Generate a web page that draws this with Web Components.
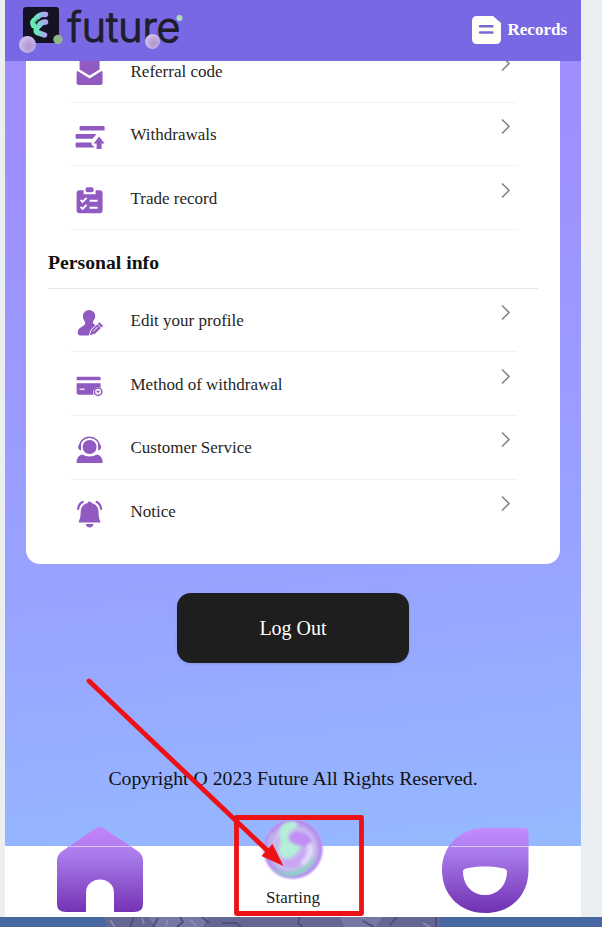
<!DOCTYPE html>
<html lang="en"><head><meta charset="utf-8"><title>Future</title>
<style>body{margin:0;background:#ebeff2;font-family:"Liberation Serif","Times New Roman",serif;color:#222}</style></head>
<body><app-screen></app-screen>
<script>
const define=(name,html)=>{const t=document.createElement('template');t.innerHTML=html;
customElements.define(name,class extends HTMLElement{constructor(){super();this.attachShadow({mode:'open'}).append(t.content.cloneNode(true))}})};

const icons={
mail:'<path d="M4 0h18q1 0 1 1v9.500l-10 6-10-6V1q0-1 1-1Z"/><path d="M1 12 13 19.500 25 12q1 0 1 2v10q0 2-2 2H2q-2 0-2-2V14q0-2 1-2Z"/>',
withdraw:'<path d="M4 3h23a1 1 0 0 1 1 1v3.500H3V4a1 1 0 0 1 1-1ZM0 11h20l-4 4.800H0a1 1 0 0 1-1-1V12a1 1 0 0 1 1-1ZM0 19.500h15v2l3 3H0a1 1 0 0 1-1-1v-3a1 1 0 0 1 1-1Z"/><path d="m22.500 13.500 5.500 7h-3V26h-5v-5.500h-3Z"/>',
trade:'<g transform="translate(0 .8)"><path fill-rule="evenodd" d="M3 3.500h4v4h12v-4h4q3 0 3 3v17q0 3-3 3H3q-3 0-3-3v-17q0-3 3-3Z"/><rect x="9" y=".5" width="8" height="5" rx="2"/><path d="m4 13 2 2 4-4m3 3h8M4 20l2 2 4-4m3 3h8" fill="none" stroke="#fff" stroke-width="1.900"/></g>',
edit:'<path d="M12.500 1a6.200 6.200 0 0 1 6.200 6.200c0 3-2.500 4.300-2.500 6.300 0 1.500 2.300 2 3.300 2.700L12.500 26.500H3Q.8 26 1.200 22.500c.5-4 5.800-5 7.300-7.500.8-2-2.200-4-2.200-7.800A6.200 6.200 0 0 1 12.500 1Z"/><path d="m12.500 27 2-6 8.300-8.300 4.200 4.200-8.300 8.100Z" stroke="#fff" stroke-width="1"/><path d="m20.500 14.800 4.300 4.200M16.500 22.500l4.500-4.500" stroke="#fff" stroke-width="1"/>',
card:'<g transform="translate(0 .7)"><path d="M1 4h22q1 0 1 1v2.500H0V5q0-1 1-1ZM0 10.500h24v4.200a5.300 5.300 0 0 0-6.800 7.300H2q-2 0-2-2Z"/><path d="M3 16.500h5" stroke="#fff" stroke-width="1.200"/><circle cx="21.500" cy="19" r="3.700" fill="#fff" stroke="#905ac0" stroke-width="1.500"/><path d="M19.700 19h3.600M21.500 17.200v3.600" stroke="#905ac0" stroke-width="1"/></g>',
service:'<circle cx="13" cy="11" r="7"/><path d="M3 11a10 9.800 0 0 1 20 0" fill="none" stroke="#905ac0" stroke-width="1.500"/><path d="M4.500 7.500v7q-3-1-3-3.500t3-3.500ZM21.500 7.500v7q3-1 3-3.500t-3-3.500Z"/><path d="M5.500 18.500q3.500 2 7.500 2t7.500-2Q26 19.500 26 27H0q0-7.500 5.500-8.500Z"/>',
bell:'<path d="M13 1.500q2 0 2 1.500c5 1 7 5 7 10 0 5 1 6 2 9.500H2C3 19 4 18 4 13S6 4 11 3q0-1.500 2-1.500ZM9 24h8q-1 3.500-4 3.500T9 24Z"/><path d="M6 2Q2 4 1.500 9M20 2q4 2 4.500 7" fill="none" stroke="#905ac0" stroke-width="2.200" stroke-linecap="round"/>'};

define('brand-logo',`<style>:host{display:block;width:170px;height:61px}svg{display:block}text{font-family:Inter,sans-serif;font-size:41.5px;font-weight:300;fill:#201d2b;stroke:#201d2b;stroke-width:1.2;stroke-linejoin:round}</style>
<svg width="170" height="61" viewBox="14 0 170 61"><defs><linearGradient id="l"><stop stop-color="#62edb1"/><stop offset=".5" stop-color="#88c9d7"/><stop offset="1" stop-color="#b4a0f5"/></linearGradient><radialGradient id="b" cx=".6" cy=".6"><stop stop-color="#b296cf"/><stop offset=".65" stop-color="#bda8df"/><stop offset="1" stop-color="#cbbbea"/></radialGradient></defs>
<rect x="23" y="7" width="36" height="36" rx="3" fill="#151323"/>
<g fill="none" stroke-linecap="round"><path d="M45.500 14.500c-8-1-8 4-11.500 6q-2 2-.5 5" stroke="url(#l)" stroke-width="5.500"/><path d="M45.500 22c-6 0-6 4-9 7q-1.500 3 2 4l6 2" stroke="url(#l)" stroke-width="5.500"/><path d="m43.500 25.800-4 3.700M38 19.500l-3 3" stroke="#151323" stroke-width="1"/></g>
<text x="67.500" y="41.500" textLength="113" lengthAdjust="spacingAndGlyphs">future</text>
<circle cx="27.500" cy="44.500" r="8.500" fill="url(#b)"/><circle cx="58" cy="39.500" r="4.700" fill="#8fb58d"/><circle cx="152.500" cy="41.500" r="7.500" fill="url(#b)"/><circle cx="179.500" cy="18" r="3" fill="#a6dfb2"/></svg>`);

define('app-header',`<style>:host{display:flex;align-items:center;justify-content:space-between;height:61px;background:#7968e3;padding:0 14px 0 9px;box-sizing:border-box;color:#fff;flex:none;position:relative}.rec{display:flex;align-items:center;gap:7px;font-weight:bold;font-size:17px;margin-top:-1px}.rec svg{display:block}</style>
<brand-logo></brand-logo><div class="rec"><svg width="29" height="28"><path d="M5 0h16l8 7v16q0 5-5 5H5q-5 0-5-5V5q0-5 5-5Z" fill="#fffef8"/><path d="M8 10.300h12.500M8 16.500h12.500" stroke="#7968d0" stroke-width="2.400" stroke-linecap="round"/></svg><span>Records</span></div>`);

const row=document.createElement('template');
row.innerHTML=`<style>:host{display:flex;box-sizing:border-box;height:63.6px;margin:0 43px 0 44px;border-bottom:1px solid #f2f2f2;padding:0 5px 0 5.5px;align-items:flex-start}:host([last]){border:0}.ic{width:28px;height:28px;margin:20px 27px 0 0;fill:#905ac0;overflow:visible;flex:none}.label{flex:1;font-size:17px;line-height:20px;margin-top:22.5px;color:#262626}.chev{margin-top:15.500px;flex:none}</style><svg class="ic" viewBox="-.6 0 28 28"></svg><span class="label"><slot></slot></span><svg class="chev" width="12" height="17"><path d="m2 1.500 7 7-7 7" fill="none" stroke="#85858a" stroke-width="1.600"/></svg>`;
customElements.define('menu-row',class extends HTMLElement{constructor(){super();this.attachShadow({mode:'open'}).append(row.content.cloneNode(true));}
connectedCallback(){this.shadowRoot.querySelector('.ic').innerHTML=icons[this.getAttribute('icon')];}});

define('section-title',`<style>:host{display:block;box-sizing:border-box;height:59px;margin:0 22px;border-bottom:1px solid #e8e8e8;font-size:19.7px;font-weight:bold;line-height:22px;padding-top:21px;color:#111}</style><slot></slot>`);
define('menu-card',`<style>:host{display:block;box-sizing:border-box;height:525px;background:#fff;border-radius:14px;margin:-22px 21px 0;flex:none}</style><slot></slot>`);
define('logout-button',`<style>:host{display:block;margin:29px auto 0;flex:none}button{display:block;width:232px;height:70px;border:0;border-radius:14px;background:#1e1e1e;color:#fff;font:20px "Liberation Serif",serif;padding:0;box-shadow:0 1px 3px #0002}</style><button><slot></slot></button>`);

define('tab-bar',`<style>:host{display:grid;grid-template-columns:1fr 1fr 1fr;height:71px;background:#fff;flex:none;box-sizing:border-box}.tab{display:flex;flex-direction:column;align-items:center;color:#222;font-size:17px}svg{display:block;margin-top:-20px;overflow:visible}.orb{margin-top:-29px}.label{line-height:20px;margin-top:7px}</style>
<div class="tab"><svg width="90" height="90" viewBox="56 826 90 90"><defs><linearGradient id="p" x2="0" y2="1"><stop stop-color="#c783fb"/><stop offset=".35" stop-color="#a77ae9"/><stop offset="1" stop-color="#7532b5"/></linearGradient></defs><path d="M96 828q3.500-2 7 0l36 24q4 4 4 8v44q0 8-9 8h-20V893c0-18-28-18-28 0v19H66q-9 0-9-8V860q0-4 4-8Z" fill="url(#p)"/><path d="M67 846.500h65" stroke="#dcc9fb"/></svg></div>
<div class="tab"><svg class="orb" width="64" height="64" viewBox="261 818 64 64"><defs><radialGradient id="o"><stop stop-color="#c3a5f4"/><stop offset=".7" stop-color="#c9bdf0"/><stop offset=".9" stop-color="#b58aee"/><stop offset="1" stop-color="#caa0ff" stop-opacity=".2"/></radialGradient><filter id="blur" x="-20%" y="-20%" width="140%" height="140%"><feGaussianBlur stdDeviation="1.600"/></filter></defs><circle cx="293" cy="850" r="31" fill="url(#o)"/><g filter="url(#blur)"><path d="M287 823c10-2 14 2 8 6-8 5-10 10-3 15 7 0 11 2 7 8-6 8-16 11-20 2-1-6 3-9 1-15-2-7 0-13 7-16Z" fill="#b4efd7"/><path d="M290 836c5-6 14-4 20 2 4 7-2 10-9 9-9-1-14-6-11-11Z" fill="#c08ff5"/><path d="M283 860c9 3 16 0 20-8 5 7-1 17-12 16-6 0-10-3-8-8Z" fill="#c9a4f4"/><path d="M271 868c15 10 34 4 45-14-3 23-31 32-45 14Z" fill="#8ecfc9"/><path d="M309 845q5 10-7 20" fill="none" stroke="#e4dcf9" stroke-width="5"/><path d="M273 834q-7 15 5 29" fill="none" stroke="#bdb0e6" stroke-width="5"/></g></svg><span class="label">Starting</span></div>
<div class="tab"><svg width="90" height="90" viewBox="440 826 90 90"><defs><linearGradient id="q" x2="0" y2="1"><stop stop-color="#c58bff"/><stop offset=".3" stop-color="#a77ae9"/><stop offset="1" stop-color="#7030b1"/></linearGradient></defs><path fill-rule="evenodd" d="M485 828h39q4.500 0 4.500 5v37c0 26-18 43-43.300 43S442 895 442 870c0-24 18-42 43-42Zm-22 43c0-6 44-6 44 0 0 32-44 32-44 0Z" fill="url(#q)"/><path d="M451 846.500h78" stroke="#dcc9fb"/></svg></div>`);

define('red-callout',`<style>:host{position:absolute;left:0;top:0;width:602px;height:927px;pointer-events:none}svg{display:block}</style><svg width="602" height="927"><g fill="none" stroke="#ed1115" stroke-width="4.800" stroke-linejoin="round" stroke-linecap="round"><path d="M236.500 817.500h125v96h-125Z"/><path d="m89 681 182 173"/></g><path d="m261.500 856 11-12 11 22Z" fill="#ed1115"/></svg>`);
define('desktop-strip',`<style>:host{display:block;height:10px;overflow:hidden}svg{display:block}</style><svg width="602" height="10"><path fill="#4767a1" d="M0 0h602v10H0Z"/><path fill="#626793" d="M104 0h336v10H107Z"/><path fill="#7777a4" d="M148 0h60l-5 10h-47ZM340 0h43l-7 10h-32Z"/><path d="m130 10 4-10M153 10l5-9M180 0l3 5-6 5M202 0l7 6M222 6h14l5 4M300 0l-2 6 5 4M363 4l11 6M397 0l-7 8M436 0v10" fill="none" stroke="#4e4f74" stroke-width="1.800"/><path d="m110 3 5 7M142 1l2 6M168 2l-2 7M191 3l5 6M423 6l7 4" stroke="#928fae" stroke-width="1.500"/></svg>`);

define('app-screen',`<style>:host{display:block;position:relative;width:602px;height:927px;overflow:hidden}.phone{display:flex;flex-direction:column;width:576px;height:917px;margin-left:5px;background:linear-gradient(174deg,#a08cff 0%,#9e90ff 20%,#98a5ff 65%,#95baff 93%)}.copy{font-size:19.75px;line-height:24px;text-align:center;color:#111;margin-top:103px;flex:1}main{display:contents}</style>
<div class="phone"><app-header></app-header><main><menu-card><menu-row icon="mail">Referral code</menu-row><menu-row icon="withdraw">Withdrawals</menu-row><menu-row icon="trade">Trade record</menu-row><section-title>Personal info</section-title><menu-row icon="edit">Edit your profile</menu-row><menu-row icon="card">Method of withdrawal</menu-row><menu-row icon="service">Customer Service</menu-row><menu-row icon="bell" last>Notice</menu-row></menu-card><logout-button>Log Out</logout-button><div class="copy">Copyright O 2023 Future All Rights Reserved.</div></main><tab-bar></tab-bar></div><desktop-strip></desktop-strip><red-callout></red-callout>`);
</script></body></html>
